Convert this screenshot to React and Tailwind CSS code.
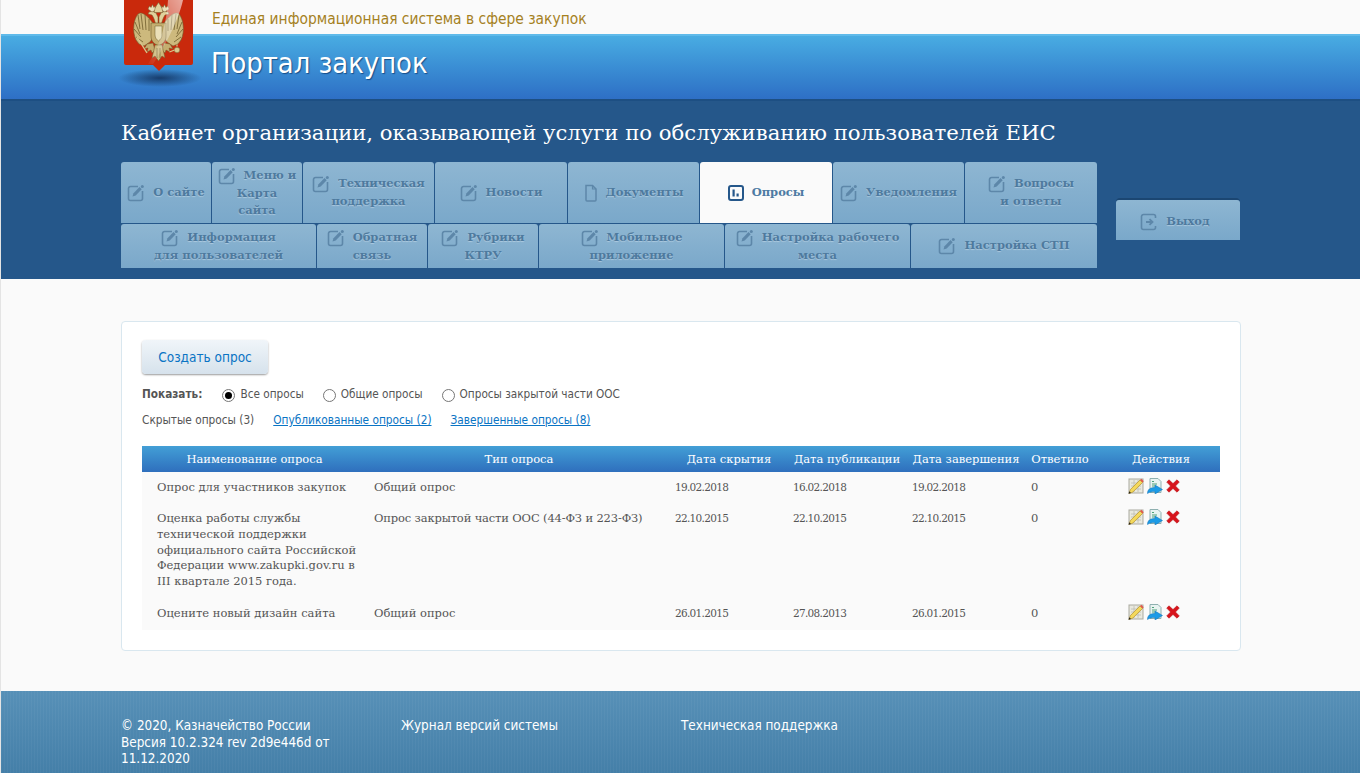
import React from 'react';

const slab = "font-['DejaVu_Serif',serif]";
const sans = "font-['DejaVu_Sans_Condensed','Noto_Sans',sans-serif]";

const EditIcon = ({ className = 'text-[#5d87a9]' }) => (
  <svg width="18" height="18" viewBox="0 0 18 18" fill="none" className={`shrink-0 ${className}`}>
    <path d="M11 2.500H3.500a2 2 0 0 0-2 2v10a2 2 0 0 0 2 2h10a2 2 0 0 0 2-2V7" stroke="currentColor" strokeWidth="1.6" />
    <path d="M5.500 12.500l1-3.200 6-6.300 2.200 2.200-6 6.200z" fill="currentColor" />
    <circle cx="15.300" cy="2.400" r="1.500" fill="currentColor" />
  </svg>
);

const DocIcon = () => (
  <svg width="14" height="18" viewBox="0 0 14 18" fill="none" className="shrink-0 text-[#5d87a9]">
    <path d="M2 1.500h6.500L12 5v11a1 1 0 0 1-1 1H3a1 1 0 0 1-1-1z" stroke="currentColor" strokeWidth="1.5" />
    <path d="M8.500 1.500V5H12" stroke="currentColor" strokeWidth="1.2" />
  </svg>
);

const ChartIcon = () => (
  <svg width="16" height="16" viewBox="0 0 16 16" fill="none" className="shrink-0 text-[#25578a]">
    <rect x="1" y="1" width="14" height="14" rx="2" stroke="currentColor" strokeWidth="2" />
    <rect x="4.500" y="4.500" width="2.200" height="7" fill="currentColor" />
    <rect x="8.500" y="8.500" width="2.200" height="3" fill="currentColor" />
  </svg>
);

const ExitIcon = () => (
  <svg width="18" height="18" viewBox="0 0 18 18" fill="none" className="shrink-0 text-[#5d87a9]">
    <path d="M15.500 5V3.500a2 2 0 0 0-2-2h-10a2 2 0 0 0-2 2v11a2 2 0 0 0 2 2h10a2 2 0 0 0 2-2V13" stroke="currentColor" strokeWidth="1.6" />
    <path d="M6 9h6M9.500 6.200L12.500 9l-3 2.800" stroke="currentColor" strokeWidth="1.8" />
  </svg>
);

const PencilNote = () => (
  <svg width="16" height="16" viewBox="0 0 16 16">
    <rect x="1" y="1" width="14" height="14" fill="#e9e9df" stroke="#a9a9a0" />
    <path d="M3 5h10M3 8h10M3 11h10M6 2v12M10 2v12" stroke="#bdbdb3" strokeWidth="0.8" />
    <path d="M1 15.500l1.400-4L12 2l2.500 2.500-9.600 9.500z" fill="#f4d95c" stroke="#b4912a" strokeWidth="0.7" />
    <path d="M12 2l1.300-1.200 2.400 2.400-1.200 1.300z" fill="#e2574c" />
    <path d="M0.500 15.800l.9-2.500 1.600 1.600z" fill="#222" />
  </svg>
);

const DocArrow = () => (
  <svg width="16" height="16" viewBox="0 0 16 16">
    <path d="M3 .5h8l3 3v11H3z" fill="#e8f3f1" stroke="#8fb0b0" />
    <path d="M5 3.500h2M5 6h5M5 8h3" stroke="#4fa27a" strokeWidth="1" />
    <path d="M.5 15.500C.5 11.500 3 9.500 8 9.500V7l7.500 4.500L8 16v-2.500c-3 0-5.500.5-7.500 2z" fill="#1b9be6" stroke="#0f6fb5" strokeWidth="0.5" />
  </svg>
);

const RedX = () => (
  <svg width="14" height="14" viewBox="0 0 14 14">
    <path d="M3 .8L7 4.500 11 .8l2.300 2.300L9.500 7l3.800 3.900L11 13.200 7 9.500 3 13.200.7 10.900 4.500 7 .7 3.100z" fill="#d8141c" stroke="#b01015" strokeWidth="0.5" />
  </svg>
);

const Eagle = () => {
  const half = (
    <g>
      <path d="M30 24C26 20 22 13 16 13c-3 1-5 5-6 11-1 6 0 12 2 16l3 4 5 2 6-4 4-6z" fill="#cdb97d" stroke="#6f5d2c" strokeWidth="0.6" />
      <path d="M14 15l2 14M17 14l2 16M21 15l1 15M25 19v12M11 22l5 12M10 29l7 8M12 37l7 5" stroke="#6f5d2c" strokeWidth="0.8" fill="none" />
      <path d="M32 26c-1-5-2-8-4-11l-4-1 1-2 4-1 3 2 2 4v9z" fill="#e0d19c" stroke="#6f5d2c" strokeWidth="0.5" />
      <path d="M24 9l1.500-3 1.500 1.500L28.500 4.500 30 7.500 31.500 6 32 10l-4 2z" fill="#eadfb8" stroke="#6f5d2c" strokeWidth="0.5" />
      <path d="M29 43l-6 1-3 5 4-1-1 4 4-2 1 3 3-3z" fill="#c4ae70" stroke="#6f5d2c" strokeWidth="0.5" />
    </g>
  );
  return (
    <svg width="69" height="66" viewBox="0 0 69 66" className="absolute left-0 top-0">
      <defs>
        <linearGradient id="gloss" x1="1" y1="0" x2="0" y2="1">
          <stop offset="0" stopColor="#fff" stopOpacity="0.6" />
          <stop offset="1" stopColor="#fff" stopOpacity="0.03" />
        </linearGradient>
      </defs>
      {half}
      <g transform="translate(69,0) scale(-1,1)">{half}</g>
      <path d="M13 37l10 16" stroke="#d9c88f" strokeWidth="1.400" />
      <circle cx="53" cy="50" r="2.800" fill="#d9c88f" stroke="#6f5d2c" strokeWidth="0.5" />
      <path d="M53 46.500v-2M50.500 50l-5 2" stroke="#d9c88f" strokeWidth="1.200" />
      <path d="M27 23h15v13c0 6-4 8-7.500 10-3.500-2-7.500-4-7.500-10z" fill="#c4ae70" stroke="#6f5d2c" strokeWidth="0.6" />
      <path d="M31 26h7v9c0 3-2 5-3.500 6-1.500-1-3.500-3-3.500-6z" fill="#eadfb8" stroke="#6f5d2c" strokeWidth="0.5" />
      <path d="M31 8.500l1.500-3 2-3 2 3 1.500 3 1 4H30z" fill="#e0d19c" stroke="#6f5d2c" strokeWidth="0.5" />
      <path d="M31 45h7l3 13-3-2-3.500 5-3.500-5-3 2z" fill="#cdb97d" stroke="#6f5d2c" strokeWidth="0.5" />
      <path d="M33 48v10M36 48v10" stroke="#6f5d2c" strokeWidth="0.6" />
      <path d="M44 0h15C54 22 40 48 29 64h-5C36 46 43 22 44 0z" fill="url(#gloss)" />
    </svg>
  );
};

const Tab = ({ w, icon, lines, active = false }) => (
  <div className={`${w} flex items-center justify-center rounded-t-[3px] px-1 text-center text-[11.5px] font-bold leading-[17px] ${slab} ${active ? 'bg-[#fafafa] text-[#4d7ba3]' : 'bg-gradient-to-b from-[#8eb6d2] to-[#7aa8ca] text-[#4e7a9e] [text-shadow:0_1px_1px_rgba(225,235,245,0.45)]'}`}>
    <div>
      {lines.map((l, i) => (
        <div key={i} className="whitespace-nowrap">
          {i === 0 && <span className="mr-2 inline-block align-middle">{icon}</span>}
          {l}
        </div>
      ))}
    </div>
  </div>
);

const rows = [
  { name: ['Опрос для участников закупок'], type: 'Общий опрос', a: '19.02.2018', b: '16.02.2018', c: '19.02.2018', h: 'h-[31px]' },
  {
    name: ['Оценка работы службы', 'технической поддержки', 'официального сайта Российской', 'Федерации www.zakupki.gov.ru в', 'III квартале 2015 года.'],
    type: 'Опрос закрытой части ООС (44-ФЗ и 223-ФЗ)', a: '22.10.2015', b: '22.10.2015', c: '22.10.2015', h: 'h-[95px]', narrow: true,
  },
  { name: ['Оцените новый дизайн сайта'], type: 'Общий опрос', a: '26.01.2015', b: '27.08.2013', c: '26.01.2015', h: 'h-[32px]' },
];

const Radio = ({ on, label }) => (
  <span className="flex items-center gap-[5px]">
    <span className="flex h-[13px] w-[13px] items-center justify-center rounded-full border border-[#767676] bg-white">
      {on && <span className="h-[7px] w-[7px] rounded-full bg-black" />}
    </span>
    {label}
  </span>
);

const dateCell = 'pt-[8px] text-[10.5px] tracking-[-0.7px]';

export default function App() {
  return (
    <div className={`h-[773px] overflow-hidden border-l border-[#e4e4e4] bg-[#fafafa] ${sans}`}>
      <header className="relative">
        <div className="flex h-[34px] items-center pl-[211px] pt-[6px] text-[15.4px] text-[#a5811f]">
          Единая информационная система в сфере закупок
        </div>
        <div className="flex h-[65px] items-start border-t-2 border-[#5fbaea] bg-gradient-to-b from-[#49ace2] to-[#2e6fc5] pl-[210px] pt-[7px] text-[28.8px] leading-[40px] text-white [text-shadow:1px_1px_1px_rgba(0,40,90,0.6)]">
          Портал закупок
        </div>
        <div className="absolute left-[117px] top-[69px] h-[18px] w-[84px] bg-[radial-gradient(ellipse_at_center,rgba(18,48,90,0.85),rgba(18,48,90,0)_70%)]" />
        <div className="absolute left-[123px] top-0 h-[65px] w-[69px] rounded-b-[2px] bg-[#c9290c]">
          <Eagle />
          <div className="absolute bottom-[-6px] left-[29px] h-0 w-0 border-x-[6px] border-t-[6px] border-x-transparent border-t-[#c9290c]" />
        </div>
      </header>

      <section className="h-[180px] border-t-2 border-[#1d4f83] bg-[#25578a] pl-[120px] pt-[18px]">
        <h1 className={`text-[21.2px] font-normal leading-[28px] text-white ${slab}`}>
          Кабинет организации, оказывающей услуги по обслуживанию пользователей ЕИС
        </h1>
        <div className="mt-[15px] flex items-start">
          <div className="flex w-[976px] flex-col gap-px">
            <div className="flex h-[61px] gap-px">
              <Tab w="w-[90px]" icon={<EditIcon />} lines={['О сайте']} />
              <Tab w="w-[90px]" icon={<EditIcon />} lines={['Меню и', 'Карта', 'сайта']} />
              <Tab w="w-[131px]" icon={<EditIcon />} lines={['Техническая', 'поддержка']} />
              <Tab w="w-[132px]" icon={<EditIcon />} lines={['Новости']} />
              <Tab w="w-[131px]" icon={<DocIcon />} lines={['Документы']} />
              <Tab w="w-[132px]" icon={<ChartIcon />} lines={['Опросы']} active />
              <Tab w="w-[131px]" icon={<EditIcon />} lines={['Уведомления']} />
              <Tab w="w-[132px]" icon={<EditIcon />} lines={['Вопросы', 'и ответы']} />
            </div>
            <div className="flex h-[44px] gap-px">
              <Tab w="w-[195px]" icon={<EditIcon />} lines={['Информация', 'для пользователей']} />
              <Tab w="w-[110px]" icon={<EditIcon />} lines={['Обратная', 'связь']} />
              <Tab w="w-[110px]" icon={<EditIcon />} lines={['Рубрики', 'КТРУ']} />
              <Tab w="w-[185px]" icon={<EditIcon />} lines={['Мобильное', 'приложение']} />
              <Tab w="w-[185px]" icon={<EditIcon />} lines={['Настройка рабочего', 'места']} />
              <Tab w="w-[186px]" icon={<EditIcon />} lines={['Настройка СТП']} />
            </div>
          </div>
          <div className="ml-[19px] mt-[36px] flex h-[42px] w-[124px] rounded-t-[4px] border-t-2 border-[#1b4672]">
            <Tab w="w-full pr-[10px] pt-[4px]" icon={<ExitIcon />} lines={['Выход']} />
          </div>
        </div>
      </section>

      <main className="ml-[120px] mt-[42px] h-[330px] w-[1120px] rounded-[4px] border border-[#d9e7ef] bg-white px-[20px] pt-[18px]">
        <button className="h-[34px] w-[126px] rounded-[4px] bg-gradient-to-b from-[#f0f5f9] to-[#d6e2ec] text-[13.5px] text-[#0a74c4] shadow-[0_1px_2px_rgba(0,0,0,0.4)]">
          Создать опрос
        </button>
        <div className="mt-[13px] flex h-[16px] items-center text-[11.7px] text-[#555]">
          <b className="mr-[20px] text-[#555]">Показать:</b>
          <span className="flex gap-[19px]">
            <Radio on label="Все опросы" />
            <Radio label="Общие опросы" />
            <Radio label="Опросы закрытой части ООС" />
          </span>
        </div>
        <div className="mt-[10px] flex h-[16px] items-center gap-[19px] text-[11.75px] text-[#555]">
          <span>Скрытые опросы (3)</span>
          <a className="text-[#0a74c4] underline">Опубликованные опросы (2)</a>
          <a className="text-[#0a74c4] underline">Завершенные опросы (8)</a>
        </div>
        <table className={`mt-[17px] w-[1078px] table-fixed border-collapse text-[11.5px] text-[#555] ${slab}`}>
          <colgroup>
            <col className="w-[225px]" />
            <col className="w-[304px]" />
            <col className="w-[116px]" />
            <col className="w-[120px]" />
            <col className="w-[118px]" />
            <col className="w-[77px]" />
            <col className="w-[118px]" />
          </colgroup>
          <thead>
            <tr className="h-[26px] bg-gradient-to-b from-[#439fd6] to-[#2f6fbd] text-center text-white">
              {['Наименование опроса', 'Тип опроса', 'Дата скрытия', 'Дата публикации', 'Дата завершения'].map((h) => (
                <th key={h} className="whitespace-nowrap p-0 pt-px font-normal">{h}</th>
              ))}
              <th className="whitespace-nowrap p-0 pr-[7px] pt-px font-normal">Ответило</th>
              <th className="whitespace-nowrap p-0 pt-px font-normal">Действия</th>
            </tr>
          </thead>
          <tbody>
            {rows.map((r) => (
              <tr key={r.a + r.type} className={`${r.h} bg-[#fafafa] align-top leading-[15.75px]`}>
                <td className="pb-0 pl-[15px] pr-0 pt-[8px] whitespace-nowrap">
                  {r.name.map((n) => <div key={n}>{n}</div>)}
                </td>
                <td className={`pl-[7px] pt-[8px] whitespace-nowrap ${r.narrow ? 'tracking-[-0.15px]' : ''}`}>{r.type}</td>
                <td className={`pl-[4px] ${dateCell}`}>{r.a}</td>
                <td className={`pl-[6px] ${dateCell}`}>{r.b}</td>
                <td className={`pl-[5px] ${dateCell}`}>{r.c}</td>
                <td className="pl-[6px] pt-[8px]">0</td>
                <td className="pl-[26px] pt-[6px]">
                  <span className="flex items-center gap-[3px]">
                    <PencilNote />
                    <DocArrow />
                    <RedX />
                  </span>
                </td>
              </tr>
            ))}
          </tbody>
        </table>
      </main>

      <footer className="mt-[40px] flex h-[82px] bg-[repeating-linear-gradient(90deg,rgba(255,255,255,0.035)_0,rgba(255,255,255,0.035)_1px,transparent_1px,transparent_3px),linear-gradient(#5790b7,#447fa8)] pl-[120px] pt-[27px] text-[13.4px] leading-[16.5px] text-white">
        <div className="w-[280px] pr-[40px]">
          <div>© 2020, Казначейство России</div>
          <div>Версия 10.2.324 rev 2d9e446d от 11.12.2020</div>
        </div>
        <div className="w-[280px]">Журнал версий системы</div>
        <div>Техническая поддержка</div>
      </footer>
    </div>
  );
}
